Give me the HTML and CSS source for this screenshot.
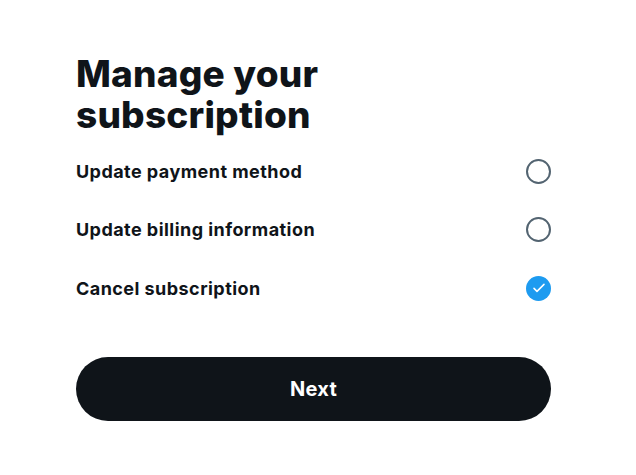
FILE: index.html
```html
<!DOCTYPE html>
<html lang="en">
<head>
<meta charset="utf-8">
<title>Manage your subscription</title>
<link rel="stylesheet" href="styles.css">
</head>
<body>
<main class="panel">
  <h1 class="title">Manage your subscription</h1>
  <ul class="options">
    <li class="option">
      <span class="label">Update payment method</span>
      <span class="radio"></span>
    </li>
    <li class="option">
      <span class="label">Update billing information</span>
      <span class="radio"></span>
    </li>
    <li class="option">
      <span class="label">Cancel subscription</span>
      <span class="radio checked">
        <svg viewBox="0 0 24 24" width="16" height="16" aria-hidden="true"><path d="M4.5 12.5l4.5 4.5L19.5 6.5" fill="none" stroke="#fff" stroke-width="2.3" stroke-linecap="round" stroke-linejoin="round"/></svg>
      </span>
    </li>
  </ul>
  <button class="next" type="button">Next</button>
</main>
</body>
</html>
```

FILE: styles.css
```css
* { box-sizing: border-box; }
html, body { margin: 0; padding: 0; background: #fff; }
body {
  font-family: Inter, "Noto Sans", "Liberation Sans", sans-serif;
  color: #0f1419;
}
.panel {
  width: 475px;
  margin-left: 76px;
  padding-top: 53px;
  display: flex;
  flex-direction: column;
}
.title {
  margin: 0;
  font-size: 37px;
  font-weight: 800;
  line-height: 41px;
  letter-spacing: 0.2px;
  width: 300px;
}
.options {
  list-style: none;
  margin: 7px 0 0;
  padding: 0;
}
.option {
  height: 58.5px;
  display: flex;
  align-items: center;
  justify-content: space-between;
}
.label {
  font-size: 18px;
  font-weight: 700;
  letter-spacing: 0.45px;
}
.radio {
  width: 25px;
  height: 25px;
  border-radius: 50%;
  border: 2px solid #536471;
  display: flex;
  align-items: center;
  justify-content: center;
}
.radio.checked {
  border: none;
  background: #1d9bf0;
}
.next {
  margin-top: 39px;
  height: 64px;
  width: 100%;
  border: none;
  border-radius: 32px;
  background: #0f1419;
  color: #fff;
  font-family: inherit;
  font-size: 20px;
  font-weight: 700;
  letter-spacing: 0.3px;
}
```
